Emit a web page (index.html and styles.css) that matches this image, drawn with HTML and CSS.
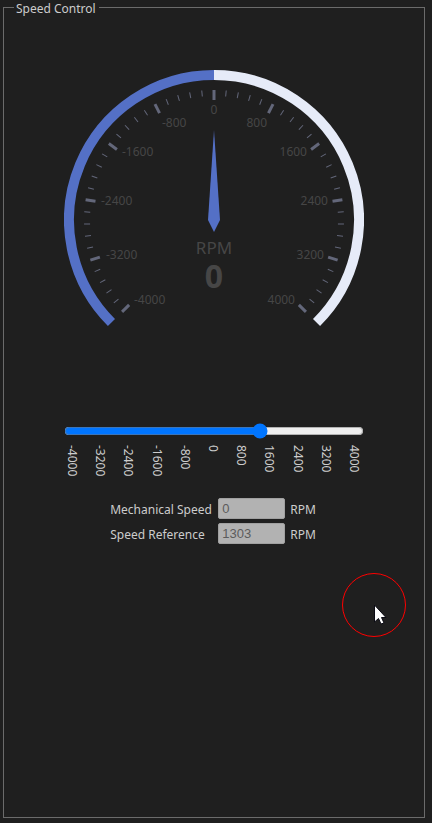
FILE: index.html
```
<!DOCTYPE html>
<html lang="en">
<head>
<meta charset="utf-8">
<title>Speed Control</title>
<link rel="stylesheet" href="styles.css">
</head>
<body>
<form class="page">
<fieldset class="panel">
  <legend>Speed Control</legend>

  <svg class="gauge" viewBox="0 0 300 300" role="img" aria-label="Speed gauge, RPM">
    <defs>
      <g id="minor">
        <path id="m" class="tick-minor" d="M150 20v6" transform="rotate(5.4 150 150)"/>
        <use href="#m" transform="rotate(5.4 150 150)"/>
        <use href="#m" transform="rotate(10.8 150 150)"/>
        <use href="#m" transform="rotate(16.2 150 150)"/>
      </g>
      <path id="major" class="tick-major" d="M150 20v10"/>
      <g id="section"><use href="#major"/><use href="#minor"/></g>
    </defs>
    <path class="arc-rest" d="M150 5A145 145 0 0 1 252.53 252.53"/>
    <path class="arc-fill" d="M47.47 252.53A145 145 0 0 1 150 5"/>
    <use href="#section" transform="rotate(-135 150 150)"/>
    <use href="#section" transform="rotate(-108 150 150)"/>
    <use href="#section" transform="rotate(-81 150 150)"/>
    <use href="#section" transform="rotate(-54 150 150)"/>
    <use href="#section" transform="rotate(-27 150 150)"/>
    <use href="#section"/>
    <use href="#section" transform="rotate(27 150 150)"/>
    <use href="#section" transform="rotate(54 150 150)"/>
    <use href="#section" transform="rotate(81 150 150)"/>
    <use href="#section" transform="rotate(108 150 150)"/>
    <use href="#major" transform="rotate(135 150 150)"/>
    <g class="scale">
      <text x="70" y="234">-4000</text>
      <text x="42" y="189">-3200</text>
      <text x="37" y="135">-2400</text>
      <text x="58" y="86">-1600</text>
      <text x="98" y="57">-800</text>
      <text class="mid" x="150" y="44">0</text>
      <text class="end" x="203" y="57">800</text>
      <text class="end" x="243" y="86">1600</text>
      <text class="end" x="264" y="135">2400</text>
      <text class="end" x="260" y="189">3200</text>
      <text class="end" x="231" y="234">4000</text>
    </g>
    <path class="needle" d="M150 60L156 150L150 162L144 150Z"/>
    <text class="unit" x="150" y="184">RPM</text>
    <text class="reading" x="150" y="218">0</text>
  </svg>

  <div class="slider">
    <input type="range" min="-4000" max="4000" step="1" value="1303" aria-label="Speed reference">
    <div class="marks">
      <span>-4000</span><span>-3200</span><span>-2400</span><span>-1600</span><span>-800</span><span>0</span><span>800</span><span>1600</span><span>2400</span><span>3200</span><span>4000</span>
    </div>
  </div>

  <div class="fields">
    <label for="mech">Mechanical Speed</label><input id="mech" type="text" value="0" disabled><span>RPM</span>
    <label for="ref">Speed Reference</label><input id="ref" type="text" value="1303" disabled><span>RPM</span>
  </div>
</fieldset>
</form>

<svg class="pointer" viewBox="0 0 66 66" aria-hidden="true">
  <circle cx="33" cy="33" r="31.5"/>
  <path d="M33.500 33V50L37.500 46.500L40 52L43 51L40.500 45.500H45Z"/>
</svg>
</body>
</html>
```
FILE: styles.css
```
* { box-sizing: border-box; }

body {
  margin: 0;
  background: #1f1f1f;
  color: #ccc;
  font: 12px/16px "Noto Sans", "Open Sans", sans-serif;
}

.page {
  display: flex;
  min-height: 100vh;
  padding: 0 7px 5px 3px;
}

.panel {
  flex: 1;
  min-width: 0;
  margin: 0;
  padding: 55px 10px 0;
  border: 1px solid #6b6b6b;
}

.panel legend {
  padding: 3px 3px 0 2px;
  line-height: 12px;
}

.gauge {
  display: block;
  width: 300px;
  margin: 0 auto;
}

.arc-rest, .arc-fill { fill: none; stroke-width: 10; }
.arc-rest { stroke: #e6ebf8; }
.arc-fill { stroke: #5470c6; }
.tick-minor { stroke: #63677a; stroke-width: 1; }
.tick-major { stroke: #63677a; stroke-width: 3; }
.scale { fill: #464646; font-size: 12px; }
.mid, .unit, .reading { text-anchor: middle; }
.end { text-anchor: end; }
.needle { fill: #5470c6; }
.unit { fill: #464646; font-size: 17px; }
.reading { fill: #464646; font-size: 32px; font-weight: bold; }

.slider {
  width: 300px;
  margin: 53px auto 0;
}

.slider input {
  display: block;
  width: 100%;
  height: 16px;
  margin: 0;
}

.marks {
  display: flex;
  justify-content: space-between;
  height: 36px;
  margin-top: 6px;
  padding-right: 2px;
}

.marks span {
  width: 16px;
  writing-mode: vertical-lr;
}

.fields {
  display: grid;
  grid-template-columns: 104px 67px auto;
  grid-auto-rows: 21px;
  gap: 4px;
  align-items: center;
  justify-content: center;
  margin-top: 17px;
}

.fields span { padding: 2px 2px 0 1px; }

.fields label {
  padding-top: 2px;
  white-space: nowrap;
}

.fields input {
  width: 100%;
  height: 21px;
  padding: 1px 3px;
  border: 1px solid #a0a0a0;
  border-radius: 2px;
  background: #b2b2b2;
  color: #5c5c5c;
  font: 13px "Liberation Sans", sans-serif;
}

.pointer {
  position: absolute;
  top: 572px;
  left: 341px;
  width: 66px;
  height: 66px;
  pointer-events: none;
}

.pointer circle { fill: none; stroke: #f00; }
.pointer path { fill: #fff; stroke: #0b0b14; }
```
